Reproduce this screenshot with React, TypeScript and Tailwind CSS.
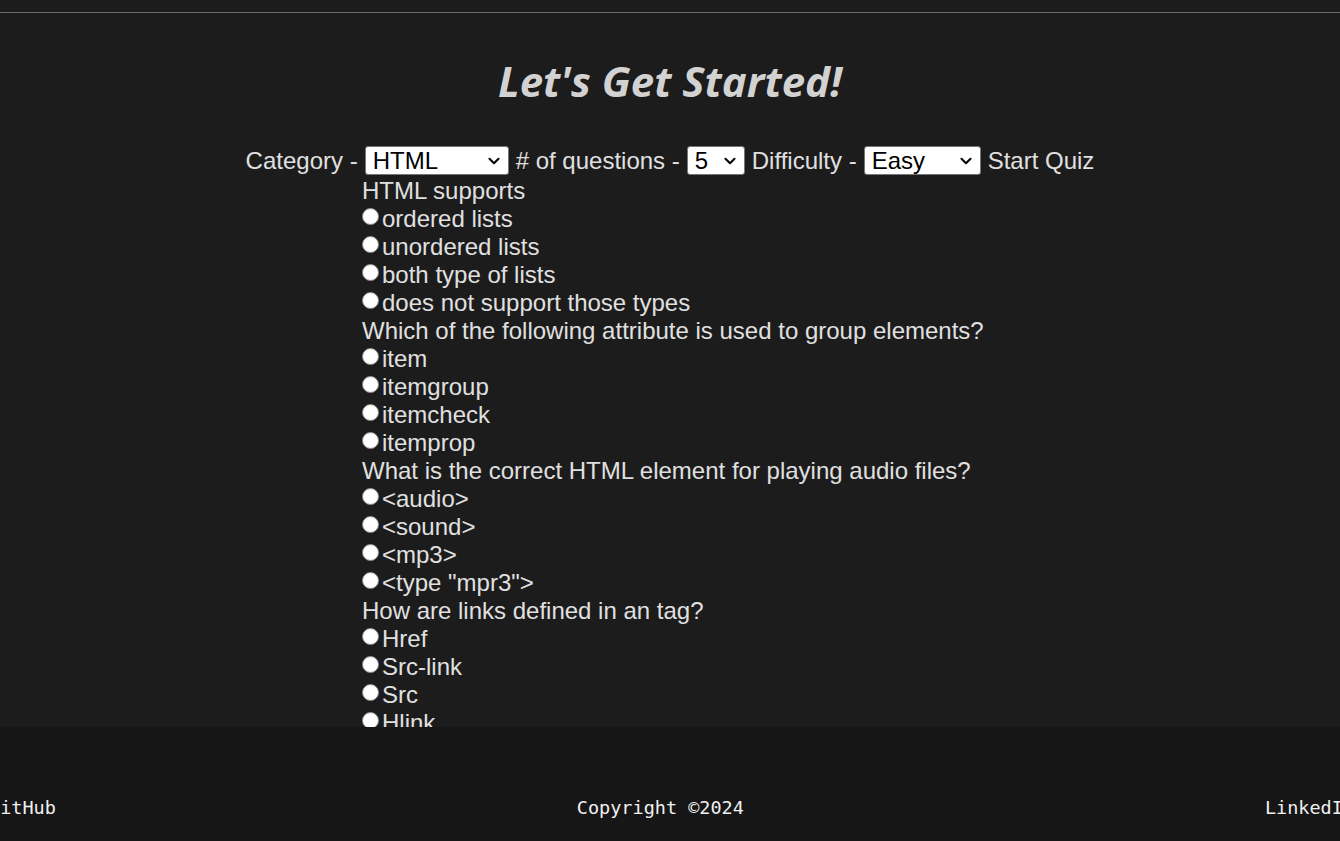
import { ChevronDown } from "lucide-react";

const questions = [
  {
    q: "HTML supports",
    options: ["ordered lists", "unordered lists", "both type of lists", "does not support those types"],
  },
  {
    q: "Which of the following attribute is used to group elements?",
    options: ["item", "itemgroup", "itemcheck", "itemprop"],
  },
  {
    q: "What is the correct HTML element for playing audio files?",
    options: ["<audio>", "<sound>", "<mp3>", '<type "mpr3">'],
  },
  {
    q: "How are links defined in an tag?",
    options: ["Href", "Src-link", "Src", "Hlink"],
  },
];

function Select({ value, width }: { value: string; width: string }) {
  return (
    <span
      className={`relative inline-flex h-[29px] items-center rounded-[3px] border border-[#767676] bg-white pl-[7px] text-black ${width}`}
    >
      <span className="leading-none">{value}</span>
      {/* chevron */}
      <ChevronDown
        className="absolute right-[5px] top-1/2 size-[18px] -translate-y-1/2 text-black"
        strokeWidth={2.75}
      />
    </span>
  );
}

export default function App() {
  return (
    <div className="flex h-screen flex-col overflow-hidden bg-[#1c1c1c] font-['Liberation_Sans',Arial,sans-serif]">
      {/* top bar */}
      <div className="h-[13px] shrink-0 border-b border-[#6b6b6b]" />

      <main className="min-h-0 flex-1 overflow-hidden text-[24px] text-[#e0e0e0]">
        <h1 className="pt-[42px] text-center font-['Open_Sans',sans-serif] text-[42px] font-bold italic leading-[52px] text-[#d2d2d2]">
          Let's Get Started!
        </h1>

        <div className="mt-[39px] flex items-center justify-center gap-[7px] whitespace-nowrap leading-[28px]">
          <span>Category -</span>
          <Select value="HTML" width="w-[144px]" />
          <span># of questions -</span>
          <Select value="5" width="w-[58px]" />
          <span>Difficulty -</span>
          <Select value="Easy" width="w-[117px]" />
          <span>Start Quiz</span>
        </div>

        <div className="mt-[2px] pl-[362px] leading-[28px]">
          {questions.map((item) => (
            <div key={item.q}>
              <div>{item.q}</div>
              {item.options.map((opt) => (
                <label key={opt} className="flex items-start">
                  <span className="mt-[3px] mr-[3px] size-[17px] shrink-0 rounded-full border border-[#8a8a8a] bg-white" />
                  <span>{opt}</span>
                </label>
              ))}
            </div>
          ))}
        </div>
      </main>

      <footer className="h-[114px] shrink-0 overflow-hidden bg-[#161616] font-['DejaVu_Sans_Mono',monospace] text-[18.5px] text-[#f0f0f0]">
        <div className="ml-[-11px] mt-[67px] flex w-[1365px] justify-between whitespace-nowrap">
          <span>GitHub</span>
          <span>Copyright ©2024</span>
          <span>LinkedIn</span>
        </div>
      </footer>
    </div>
  );
}
